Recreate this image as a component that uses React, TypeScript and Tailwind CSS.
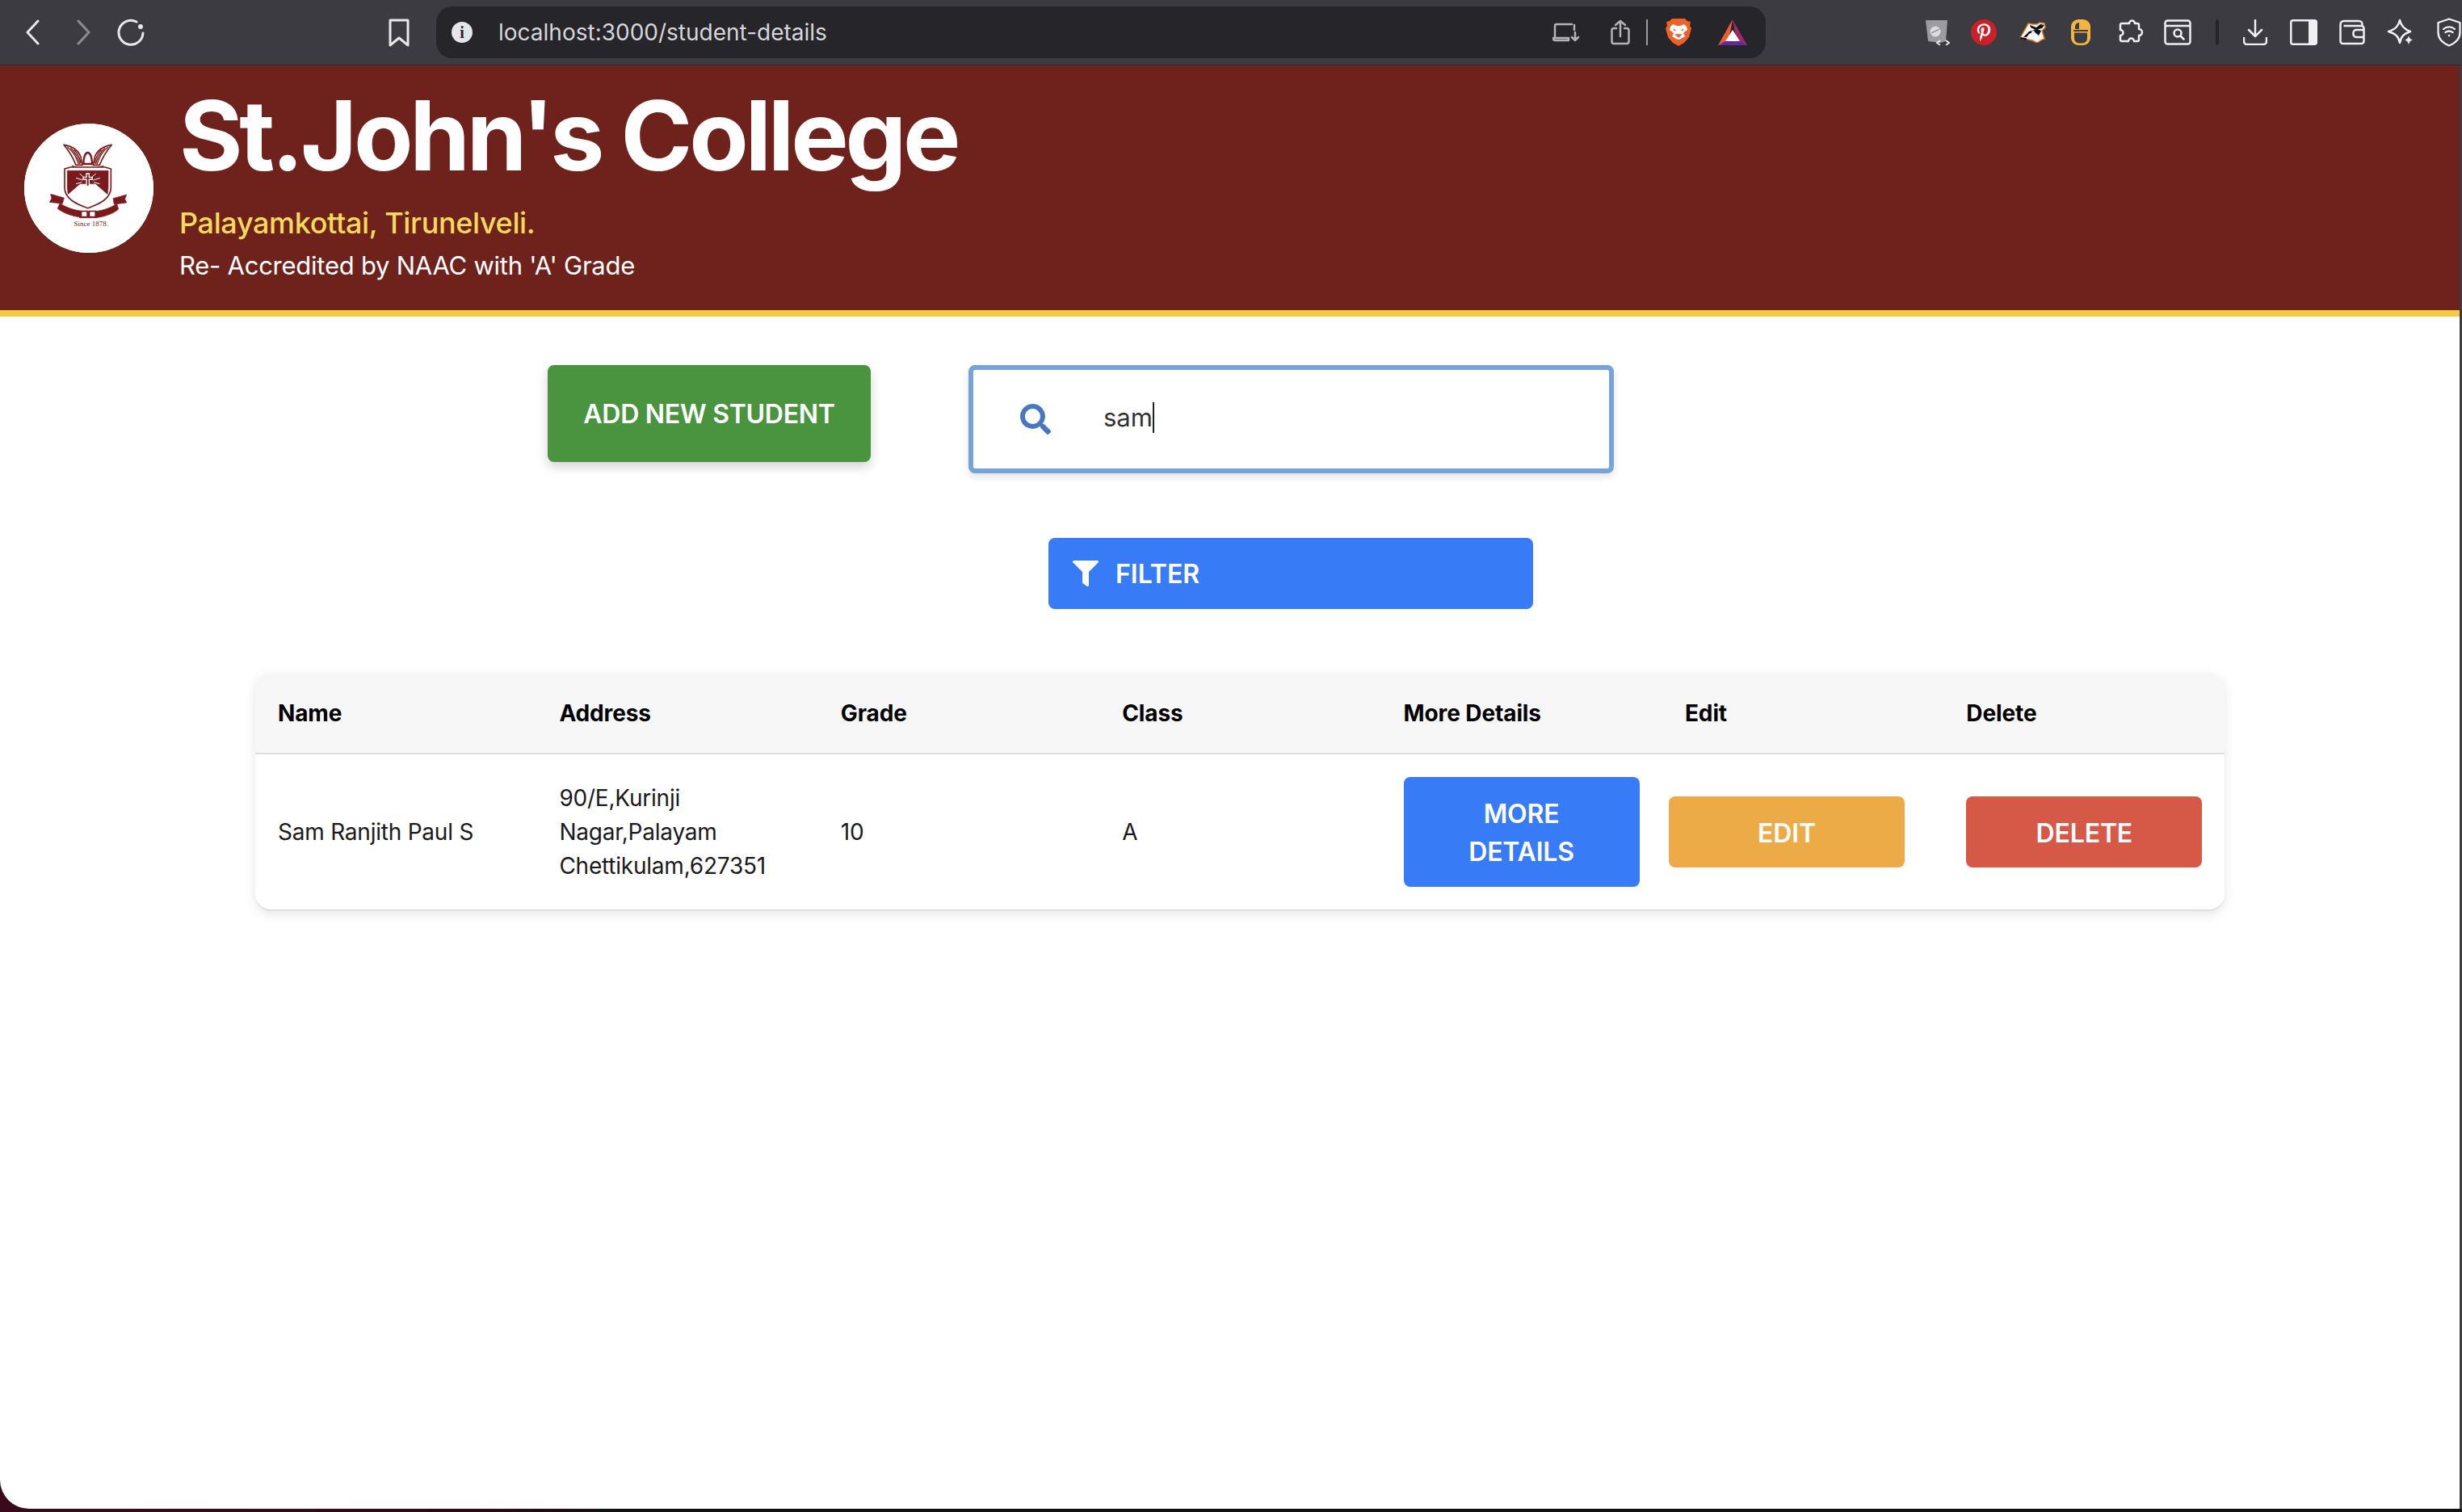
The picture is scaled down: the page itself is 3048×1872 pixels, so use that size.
import { FaFilter, FaPinterestP, FaSearch } from "react-icons/fa";

const font = "font-['Inter',sans-serif]";

const Back = () => (
  <svg width="24" height="32" viewBox="0 0 24 32" fill="none" stroke="#e8e8ea" strokeWidth="3" strokeLinecap="round" strokeLinejoin="round">
    <path d="M17 2 4 16l13 14" />
  </svg>
);

const Forward = () => (
  <svg width="24" height="32" viewBox="0 0 24 32" fill="none" stroke="#8c8c92" strokeWidth="3" strokeLinecap="round" strokeLinejoin="round">
    <path d="M7 2l13 14L7 30" />
  </svg>
);

const Reload = () => (
  <svg width="36" height="36" viewBox="0 0 36 36" fill="none" stroke="#e8e8ea" strokeWidth="3" strokeLinecap="round">
    <path d="M25 5A15 15 0 1 0 33 19" />
    <circle cx="30" cy="11" r="3" fill="#e8e8ea" stroke="none" />
  </svg>
);

const Bookmark = () => (
  <svg width="26" height="36" viewBox="0 0 26 36" fill="none" stroke="#e8e8ea" strokeWidth="3" strokeLinejoin="round">
    <path d="M2 3h22v31l-11-9-11 9z" />
  </svg>
);

const Info = () => (
  <div className="flex h-[26px] w-[26px] items-center justify-center rounded-full bg-[#e6e6ea] text-[20px] leading-none font-bold text-[#25252a] font-['Liberation_Serif',serif]">
    i
  </div>
);

const LaptopDown = () => (
  <svg width="34" height="24" viewBox="0 0 34 24" fill="none" stroke="#b4b4b8" strokeWidth="2.5" strokeLinecap="round" strokeLinejoin="round">
    <path d="M24 2H5a2 2 0 0 0-2 2v13M1 19h19v3H3a2 2 0 0 1-2-2zM27 3v6" />
    <path d="M28 12v10M24 18l4 4 4-4" />
  </svg>
);

const Share = () => (
  <svg width="24" height="32" viewBox="0 0 24 32" fill="none" stroke="#b4b4b8" strokeWidth="2.5" strokeLinecap="round" strokeLinejoin="round">
    <path d="M7 11H4a2.500 2.500 0 0 0-2.500 2.500v14A2.500 2.500 0 0 0 4 30h16a2.500 2.500 0 0 0 2.500-2.500v-14A2.500 2.500 0 0 0 20 11h-3" />
    <path d="M12 21V2M6 7l6-5 6 5" />
  </svg>
);

const Brave = () => (
  <svg width="32" height="36" viewBox="0 0 32 36">
    <path d="M8 1h16l3 3 4 1-1 5 2 3-3 11-6 7-7 4-7-4-6-7L0 13l2-3-1-5 4-1z" fill="#ef6127" />
    <path d="M9 8l5 2h4l5-2 3 3 1 4-5 4 2 4-5 3-3 1-3-1-5-3 2-4-5-4 1-4z" fill="#fff" />
    <path d="M12 16l-2-2M20 16l2-2M16 24l-3-3h6z" stroke="#ef6127" strokeWidth="1.500" fill="#ef6127" />
  </svg>
);

const Bat = () => (
  <svg width="36" height="32" viewBox="0 0 36 32">
    <path d="M18 0 0 32h12l6-32z" fill="#ef5a2f" />
    <path d="M18 0l18 32H24z" fill="#9b2a68" />
    <path d="M0 32l9-5h18l9 5z" fill="#5f2d91" />
    <path d="M18 13l9 14H9z" fill="#fff" />
  </svg>
);

const CodeShield = () => (
  <svg width="32" height="32" viewBox="0 0 32 32">
    <path d="M1 1h27l-2 26-7 2-15-2z" fill="#9c9ca0" />
    <circle cx="13" cy="15" r="6.500" fill="#dcdcde" />
    <path d="M8 17l10-5" stroke="#9c9ca0" strokeWidth="1.500" />
    <path d="M19 26l-4 3 4 3M26 26l4 3-4 3" stroke="#eee" strokeWidth="1.800" fill="none" />
  </svg>
);

const Badger = () => (
  <svg width="34" height="26" viewBox="0 0 34 26">
    <path d="M1 20 9 6l2-4 5 1h6l3-2 6 1 1 5-4 4 3 10-3 1-6 4-6-3-5-1z" fill="#f7f7f7" stroke="#d8802c" strokeWidth="1.500" strokeLinejoin="round" />
    <path d="M5 19l7-7 10-3 5 2-3 6-6-5-6 3-3 4zM13 4l8 3 5-4 5 1-3 4-8 2-6-3z" fill="#111" />
    <circle cx="17" cy="13" r="2" fill="#eee" />
    <path d="M1 20l6 1 2 1" stroke="#111" strokeWidth="2" />
  </svg>
);

const Mouse = () => (
  <svg width="24" height="32" viewBox="0 0 24 32">
    <rect width="24" height="32" rx="9" fill="#f2b63c" />
    <path d="M3 14h18" stroke="#3b3b41" strokeWidth="2" />
    <path d="M5 12V9a5 5 0 0 1 5-5v8z" fill="#3b3b41" />
    <path d="M4 16.500h16v7a6 6 0 0 1-6 6h-4a6 6 0 0 1-6-6z" fill="#3b3b41" />
  </svg>
);

const Puzzle = () => (
  <svg width="34" height="34" viewBox="0 0 34 34" fill="none" stroke="#f0f0f2" strokeWidth="2.500" strokeLinejoin="round">
    <path d="M12 6h3a3.500 3.500 0 1 1 7 0h3a2 2 0 0 1 2 2v5a3.800 3.800 0 1 1 0 8v5a2 2 0 0 1-2 2h-4a3.500 3.500 0 1 0-7 0H6a2 2 0 0 1-2-2v-5a3.500 3.500 0 1 0 0-7V8a2 2 0 0 1 2-2z" />
  </svg>
);

const WindowSearch = () => (
  <svg width="34" height="32" viewBox="0 0 34 32" fill="none" stroke="#f0f0f2" strokeWidth="2.500">
    <rect x="1.500" y="1.500" width="31" height="29" rx="3" />
    <path d="M1.500 8h31" />
    <circle cx="17" cy="17" r="4.500" />
    <path d="M20.500 20.500l4 4" strokeLinecap="round" />
  </svg>
);

const Download = () => (
  <svg width="30" height="32" viewBox="0 0 30 32" fill="none" stroke="#f0f0f2" strokeWidth="2.500" strokeLinecap="round" strokeLinejoin="round">
    <path d="M15 1v20M7 13l8 8 8-8" />
    <path d="M1 23v4a4 4 0 0 0 4 4h20a4 4 0 0 0 4-4v-4" />
  </svg>
);

const Sidebar = () => (
  <svg width="34" height="32" viewBox="0 0 34 32">
    <rect x="1.300" y="1.300" width="31.400" height="29.400" rx="2.500" fill="none" stroke="#f0f0f2" strokeWidth="2.500" />
    <path d="M23 1h9a2 2 0 0 1 2 2v26a2 2 0 0 1-2 2h-9z" fill="#f0f0f2" />
  </svg>
);

const Wallet = () => (
  <svg width="33" height="32" viewBox="0 0 33 32" fill="none" stroke="#f0f0f2" strokeWidth="2.500" strokeLinejoin="round">
    <path d="M1.500 6a4 4 0 0 1 4-4h19a4 4 0 0 1 4 4v2H5.500M1.500 6v21a3 3 0 0 0 3 3h23a3 3 0 0 0 3-3V11a3 3 0 0 0-3-3" />
    <path d="M31 13H21a3.500 3.500 0 0 0-3.500 3.500v2A3.500 3.500 0 0 0 21 22h10" />
  </svg>
);

const Sparkle = () => (
  <svg width="34" height="34" viewBox="0 0 34 34">
    <path d="M16 2c1.500 7 5 11 13 14-8 3-11.500 6-13 14-1.500-8-5-11-14-14 9-3 12.500-7 14-14z" fill="none" stroke="#f0f0f2" strokeWidth="2.500" strokeLinejoin="round" />
    <path d="M27 21c.5 3 2 4.500 5 5.500-3 1-4.500 2.500-5 6-.5-3.500-2-5-5-6 3-1 4.500-2.500 5-5.500z" fill="#f0f0f2" />
  </svg>
);

const VpnShield = () => (
  <svg width="30" height="36" viewBox="0 0 30 36" fill="none" stroke="#f0f0f2" strokeWidth="2.300" strokeLinecap="round" strokeLinejoin="round">
    <path d="M15 1.500 28.500 6v12c0 8-6 13.500-13.500 16.500C7.500 31.500 1.500 26 1.500 18V6z" />
    <path d="M8 14c4-3.500 10-3.500 14 0M10.500 18c3-2 6-2 9 0" />
    <circle cx="15" cy="22" r="1.300" fill="#f0f0f2" stroke="none" />
  </svg>
);

const Toolbar = () => (
  <div className="flex h-[81px] w-[3048px] shrink-0 items-center border-b border-[#2c2c30] bg-[#3b3b41]">
    <div className="ml-[30px]"><Back /></div>
    <div className="ml-[36px]"><Forward /></div>
    <div className="ml-[30px]"><Reload /></div>
    <div className="ml-[301px]"><Bookmark /></div>
    <div className="ml-[33px] flex h-[64px] w-[1646px] shrink-0 items-center rounded-[20px] bg-[#25252a] pl-[19px]">
      <Info />
      <span className={`ml-[32px] text-[28px] leading-none text-[#d6d6da] ${font}`}>localhost:3000/student-details</span>
      <div className="ml-auto flex items-center pr-[23px]">
        <LaptopDown />
        <div className="ml-[38px]"><Share /></div>
        <div className="ml-[20px] h-[32px] w-[2px] bg-[#9c9ca0]" />
        <div className="ml-[22px]"><Brave /></div>
        <div className="ml-[33px]"><Bat /></div>
      </div>
    </div>
    <div className="ml-[197px] shrink-0"><CodeShield /></div>
    <div className="ml-[25px] flex h-[32px] w-[32px] shrink-0 items-center justify-center rounded-full bg-[#cb2027] text-[22px] text-white"><FaPinterestP /></div>
    <div className="ml-[28px] shrink-0"><Badger /></div>
    <div className="ml-[30px] shrink-0"><Mouse /></div>
    <div className="ml-[33px] shrink-0"><Puzzle /></div>
    <div className="ml-[24px] shrink-0"><WindowSearch /></div>
    <div className="ml-[30px] h-[32px] w-[4px] shrink-0 rounded bg-[#25252a]" />
    <div className="ml-[30px] shrink-0"><Download /></div>
    <div className="ml-[28px] shrink-0"><Sidebar /></div>
    <div className="ml-[27px] shrink-0"><Wallet /></div>
    <div className="ml-[26px] shrink-0"><Sparkle /></div>
    <div className="ml-[28px] shrink-0"><VpnShield /></div>
  </div>
);

const Crest = () => (
  <svg width="160" height="160" viewBox="90 68 480 480">
    <circle cx="330" cy="308" r="240" fill="#fff" />
    <g fill="#7b1a1c" stroke="#7b1a1c" strokeLinejoin="round">
      <path d="M237 147c30 4 55 20 63 45l6 30h-24c-12-30-28-55-45-75z" fill="#fff" strokeWidth="5" />
      <path d="M415 147c-30 4-55 20-63 45l-6 30h24c12-30 28-55 45-75z" fill="#fff" strokeWidth="5" />
      <path d="M250 155c20 15 35 40 42 65M262 158c15 15 28 35 35 60M275 165c12 12 20 28 26 50M402 155c-20 15-35 40-42 65M390 158c-15 15-28 35-35 60M377 165c-12 12-20 28-26 50" fill="none" strokeWidth="4" />
      <path d="M310 218c0-22 6-42 16-42s16 20 16 42z" fill="#fff" strokeWidth="7" />
      <path d="M268 225c30 12 85 12 116 0l-6 10H274z" strokeWidth="3" />
      <path d="M240 236l22-6h128l22 6v70c0 40-40 60-86 76-46-16-86-36-86-76z" fill="#fff" strokeWidth="5" />
      <path d="M250 243h152v62l-3 28-44-40h-58l-44 40-3-28z" strokeWidth="2" />
      <path d="M252 332l46-40h56l46 40v4l-74 38-74-38z" fill="#fff" stroke="none" />
      <path d="M282 270l26 8M282 292l22-6M372 270l-26 8M370 292l-22-6M296 254l16 14M356 254l-16 14" stroke="#fff" strokeWidth="3" fill="none" />
      <path d="M319 252h14v13h12v12h-12v25h-14v-25h-12v-12h12z" fill="#fff" stroke="none" />
      <path d="M323 256h6v13h12v4h-12v25h-6v-25h-12v-4h12z" stroke="none" />
      <path d="M188 330l50 14-6 22-48-6 8-14z" strokeWidth="2" />
      <path d="M470 332l-50 14 4 22 46-6-6-14z" strokeWidth="2" />
      <path d="M222 364c25 16 50 24 76 28v24c-30-4-60-14-84-32z" strokeWidth="2" />
      <path d="M434 366c-25 16-50 24-78 28v24c32-4 62-14 84-32z" strokeWidth="2" />
      <path d="M296 392h30l2 4 2-4h28v26h-62z" strokeWidth="2" />
      <path d="M304 396h18v16h-18zM334 396h18v16h-18z" fill="#fff" stroke="none" />
    </g>
    <text x="338" y="450" textAnchor="middle" fontSize="27" fontFamily="'Liberation Serif', serif" fill="#7b1a1c">Since 1878.</text>
  </svg>
);

const Header = () => (
  <div className={`flex h-[311px] shrink-0 items-start border-b-[8px] border-[#f2cb46] bg-[#6f221b] ${font}`}>
    <div className="ml-[30px] mt-[72px] h-[160px] w-[160px] shrink-0 rounded-full bg-white">
      <Crest />
    </div>
    <div className="ml-[32px] pt-[22px]">
      <h1 className="text-[120px] leading-[130px] font-bold tracking-[-0.035em] text-white">St.John's College</h1>
      <div className="mt-[21px] text-[36px] leading-[44px] font-medium tracking-[-0.01em] text-[#f7d95c]">Palayamkottai, Tirunelveli.</div>
      <div className="mt-[11px] text-[31px] leading-[40px] tracking-[-0.008em] text-white">Re- Accredited by NAAC with 'A' Grade</div>
    </div>
  </div>
);

const SearchBar = () => (
  <div className="relative ml-[121px] flex h-[134px] w-[799px] items-center rounded-[8px] border-[6px] border-[#77a3d8] bg-white pl-[58px] shadow-[0_4px_10px_rgba(0,0,0,0.12)]">
    <FaSearch className="text-[38px] text-[#4777c2]" />
    <span className="ml-[65px] mb-[6px] text-[31px] leading-none text-[#333]">sam</span>
    <span className="mb-[4px] h-[38px] w-[2px] bg-[#222]" />
  </div>
);

const columns = ["Name", "Address", "Grade", "Class", "More Details", "Edit", "Delete"];

const ActionButton = ({ label, color, className }: any) => (
  <div className={`flex w-[292px] items-center justify-center rounded-[8px] px-[40px] pt-[2px] text-center text-[32px] leading-[47px] font-semibold tracking-[-0.005em] text-white ${color} ${className}`}>
    {label}
  </div>
);

const StudentTable = () => (
  <div className="ml-[316px] mt-[79px] w-[2438px] overflow-hidden rounded-[20px] border-b-[2px] border-[#ddd] bg-white shadow-[0_4px_14px_rgba(0,0,0,0.1)]">
    <div className="grid h-[101px] grid-cols-[repeat(7,348.4px)] items-center border-b-[2px] border-[#ddd] bg-[#f7f7f7] text-[28px] leading-[42px] font-bold tracking-[-0.004em] text-black">
      {columns.map(col => (
        <div key={col} className="pl-[28px]">{col}</div>
      ))}
    </div>
    <div className="grid h-[192px] grid-cols-[repeat(7,348.4px)] items-center text-[28px] leading-[42px] tracking-[-0.008em] text-[#1a1a1a]">
      <div className="pl-[28px]">Sam Ranjith Paul S</div>
      <div className="pl-[28px]">
        90/E,Kurinji
        <br />
        Nagar,Palayam
        <br />
        Chettikulam,627351
      </div>
      <div className="pl-[28px]">10</div>
      <div className="pl-[28px]">A</div>
      <div className="pl-[28px]">
        <ActionButton label="MORE DETAILS" color="bg-[#387bf6]" className="h-[136px]" />
      </div>
      <div className="pl-[8px]">
        <ActionButton label="EDIT" color="bg-[#edab48]" className="h-[88px]" />
      </div>
      <div className="pl-[28px]">
        <ActionButton label="DELETE" color="bg-[#d65947]" className="h-[88px]" />
      </div>
    </div>
  </div>
);

export default function App() {
  return (
    <div className="flex h-[1872px] w-[3048px] flex-col overflow-hidden bg-[linear-gradient(90deg,#3a0a1c_0%,#2a0a14_20%,#111_25%,#111_100%)]">
      <Toolbar />
      <div className="h-[1787px] shrink-0 rounded-bl-[36px] border-r-[3px] border-[#3b3b41]">
        <div className={`h-full overflow-hidden rounded-bl-[36px] bg-white ${font}`}>
          <Header />
          <div className="ml-[678px] mt-[60px] flex items-start">
            <div className="flex h-[120px] w-[400px] items-center justify-center rounded-[8px] bg-[#4a9440] pt-[2px] text-[32px] leading-none font-semibold tracking-[-0.008em] text-white shadow-[0_6px_14px_rgba(0,0,0,0.18)]">
              ADD NEW STUDENT
            </div>
            <SearchBar />
          </div>
          <div className="ml-[1298px] mt-[80px] flex h-[88px] w-[600px] items-center rounded-[8px] bg-[#387bf6] pl-[30px] text-[32px] leading-none font-semibold text-white">
            <FaFilter className="text-[32px]" />
            <span className="ml-[21px] pt-[2px]">FILTER</span>
          </div>
          <StudentTable />
        </div>
      </div>
    </div>
  );
}
